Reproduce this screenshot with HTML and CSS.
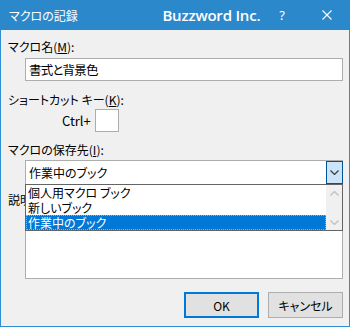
FILE: index.html
```html
<!DOCTYPE html>
<html lang="ja">
<head>
<meta charset="utf-8">
<link rel="stylesheet" href="styles.css">
<title>マクロの記録</title>
</head>
<body>
<div class="dialog">
	<div class="titlebar">
		<span class="caption">マクロの記録</span>
		<span class="brand">Buzzword Inc.</span>
		<span class="help">?</span>
		<span class="close">
			<svg width="10" height="10" viewBox="0 0 10 10"><path d="M0.5 0.5L9.5 9.5M9.5 0.5L0.5 9.5" stroke="#fff" stroke-width="1.1" fill="none"/></svg>
		</span>
	</div>
	<div class="content">
		<div class="label first">マクロ名(<u>M</u>):</div>
		<div class="field name">書式と背景色</div>

		<div class="label shortcut-label">ショートカット キー(<u>K</u>):</div>
		<div class="shortcut">
			<span class="ctrl">Ctrl+</span>
			<span class="keybox"></span>
		</div>

		<div class="label store-label">マクロの保存先(<u>I</u>):</div>
		<div class="combo">
			<span class="combo-text">作業中のブック</span>
			<span class="combo-btn">
				<svg width="9" height="5" viewBox="0 0 9 5"><path d="M0.5 0.5L4.5 4.5L8.5 0.5" stroke="#3c3c3c" stroke-width="1.2" fill="none"/></svg>
			</span>
			<!-- 開いている一覧 -->
			<div class="dropdown">
				<ul class="items">
					<li>個人用マクロ ブック</li>
					<li>新しいブック</li>
					<li class="selected">作業中のブック</li>
				</ul>
				<div class="scrollbar">
					<svg width="9" height="5" viewBox="0 0 9 5"><path d="M0.5 4.5L4.5 0.5L8.5 4.5" stroke="#c2c2c2" stroke-width="1.4" fill="none"/></svg>
					<svg width="9" height="5" viewBox="0 0 9 5"><path d="M0.5 0.5L4.5 4.5L8.5 0.5" stroke="#c2c2c2" stroke-width="1.4" fill="none"/></svg>
				</div>
			</div>
		</div>

		<!-- 一覧の下に隠れている -->
		<div class="label memo-label">説明(<u>D</u>):</div>
		<div class="field memo"></div>

		<div class="buttons">
			<button class="btn default">OK</button>
			<button class="btn">キャンセル</button>
		</div>
	</div>
</div>
</body>
</html>
```

FILE: styles.css
```css
html,body{
	margin:0;
	padding:0;
	background-color:#f0f0f0;
}
body{
	font-family:"Noto Sans CJK JP", "Noto Sans", sans-serif;
	font-feature-settings:"palt" 1;
	font-size:12px;
	color:#000;
}
.dialog{
	width:350px;
	height:327px;
	box-sizing:border-box;
	border:1px solid #2f8fd6;
	border-top:none;
	background-color:#f0f0f0;
}
.titlebar{
	height:30px;
	margin:0 -1px;
	background-color:#2b88cb;
	color:#fff;
	display:flex;
	align-items:center;
	padding:0 18px 0 9px;
}
.caption{
	font-size:12px;
}
.brand{
	margin-left:auto;
	font-family:"Open Sans", "Noto Sans", sans-serif;
	font-weight:600;
	font-size:15px;
	letter-spacing:-0.2px;
}
.help{
	margin-left:19px;
	font-family:"Noto Sans", sans-serif;
	font-size:13px;
}
.close{
	margin-left:37px;
	display:flex;
}
.content{
	padding:0 6px 0 7px;
}
.label{
	line-height:16px;
	height:16px;
	white-space:nowrap;
}
.label.first{
	margin-top:9px;
}
.shortcut-label{
	margin-top:11px;
}
.store-label{
	margin-top:10px;
}
.memo-label{
	margin-top:8px;
	width:17px;
	overflow:hidden;
}
.field{
	margin-left:17px;
	width:318px;
	box-sizing:border-box;
	border:1px solid #adadad;
	background-color:#fff;
}
.name{
	margin-top:3px;
	height:23px;
	padding-left:3px;
	font-size:12.5px;
	letter-spacing:-0.8px;
	line-height:21px;
}
.shortcut{
	margin-top:1px;
	padding-left:54px;
	display:flex;
	align-items:center;
	gap:4px;
	height:23px;
}
.ctrl{
	font-size:13px;
}
.keybox{
	width:24px;
	height:23px;
	box-sizing:border-box;
	border:1px solid #adadad;
	background-color:#fff;
}
.combo{
	position:relative;
	margin-top:2px;
	margin-left:17px;
	width:318px;
	height:24px;
	box-sizing:border-box;
	border:1px solid #adadad;
	border-bottom:none;
	background-color:#fff;
	display:flex;
}
.combo-text{
	flex:1;
	padding-left:3px;
	font-size:12px;
	line-height:23px;
}
.combo-btn{
	width:17px;
	margin:0 -1px 0 0;
	box-sizing:border-box;
	border:1px solid #005499;
	background-color:#cce4f7;
	display:flex;
	align-items:center;
	justify-content:center;
}
.dropdown{
	position:absolute;
	top:100%;
	left:-1px;
	width:318px;
	height:47px;
	box-sizing:border-box;
	border:1px solid #646464;
	background-color:#fff;
	display:flex;
	z-index:2;
}
.items{
	list-style:none;
	margin:0;
	padding:0;
	flex:1;
}
.items li{
	height:15px;
	line-height:15px;
	padding-left:2px;
	font-size:12px;
	white-space:nowrap;
}
.items li.selected{
	background-color:#0078d7;
	color:#fff;
	outline:1px dotted #f0a040;
	outline-offset:-1px;
}
.scrollbar{
	width:16px;
	background-color:#f0f0f0;
	display:flex;
	flex-direction:column;
	justify-content:space-between;
	align-items:center;
	padding:6px 0 5px;
	box-sizing:border-box;
}
.memo{
	margin-top:2px;
	height:69px;
}
.buttons{
	margin-top:13px;
	width:335px;
	display:flex;
	justify-content:flex-end;
	gap:9px;
}
.btn{
	width:75px;
	height:26px;
	box-sizing:border-box;
	border:1px solid #adadad;
	background-color:#e1e1e1;
	font-family:"Noto Sans CJK JP", "Noto Sans", sans-serif;
	font-feature-settings:"palt" 1;
	font-size:12px;
	color:#000;
	padding:0;
}
.btn.default{
	border:2px solid #0078d7;
}
```
